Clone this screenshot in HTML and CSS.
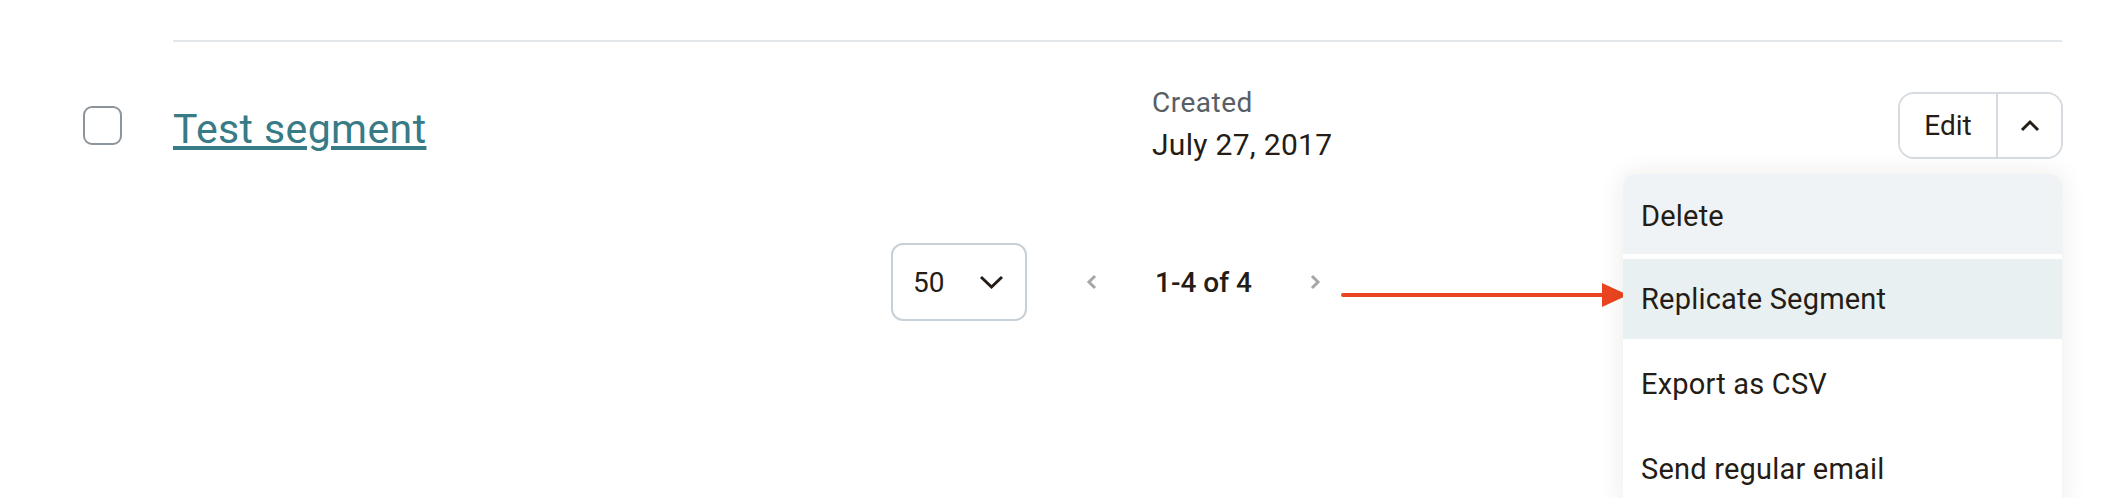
FILE: index.html
```html
<!DOCTYPE html>
<html lang="en">
<head>
<meta charset="utf-8">
<title>Segments</title>
<link rel="stylesheet" href="styles.css">
</head>
<body>
<div class="page">
  <div class="top-space"></div>
  <div class="divider"></div>

  <div class="row">
    <div class="check-cell"><span class="checkbox"></span></div>
    <div class="name-cell"><a class="segment-link" href="#">Test segment</a></div>
    <div class="created-cell">
      <div class="created-label">Created</div>
      <div class="created-date">July 27, 2017</div>
    </div>
    <div class="actions">
      <div class="split">
        <button class="split-main">Edit</button>
        <button class="split-toggle" aria-label="Toggle menu">
          <svg width="20" height="13" viewBox="0 0 20 13"><polyline points="2,11 10,3 18,11" fill="none" stroke="#241c15" stroke-width="3"/></svg>
        </button>
      </div>
      <ul class="menu">
        <li class="menu-item menu-item--first">Delete</li>
        <li class="menu-item menu-item--active">Replicate Segment</li>
        <li class="menu-item">Export as CSV</li>
        <li class="menu-item">Send regular email</li>
      </ul>
    </div>
  </div>

  <div class="pager">
    <div class="per-page">
      <span class="per-page-value">50</span>
      <svg class="per-page-chev" width="25" height="15" viewBox="0 0 25 15"><polyline points="2,2 12.5,12 23,2" fill="none" stroke="#241c15" stroke-width="3"/></svg>
    </div>
    <svg class="pager-prev" width="13" height="16" viewBox="0 0 13 16"><polyline points="10,2 4,8 10,14" fill="none" stroke="#a5a8aa" stroke-width="3"/></svg>
    <span class="pager-count">1-4 of 4</span>
    <svg class="pager-next" width="13" height="16" viewBox="0 0 13 16"><polyline points="3,2 9,8 3,14" fill="none" stroke="#a5a8aa" stroke-width="3"/></svg>
    <svg class="annot-arrow" width="290" height="26" viewBox="0 0 290 26"><line x1="3" y1="13" x2="264" y2="13" stroke="#ea4520" stroke-width="4" stroke-linecap="round"/><polygon points="262,1 288,13 262,25" fill="#ea4520"/></svg>
  </div>
</div>
</body>
</html>
```

FILE: styles.css
```css
html, body {
  margin: 0;
  padding: 0;
  background: #ffffff;
}

body {
  width: 2124px;
  height: 498px;
  overflow: hidden;
  font-family: Roboto, "Liberation Sans", Arial, sans-serif;
  color: #241c15;
}

.page {
  position: relative;
}

.top-space {
  height: 40px;
}

.divider {
  height: 2px;
  background: #e3e7ea;
  margin: 0 62px 0 173px;
}

.row {
  display: grid;
  grid-template-columns: 39px 1030px 1fr auto;
  align-items: center;
  height: 167px;
  padding: 0 61px 0 83px;
}

.checkbox {
  display: block;
  width: 39px;
  height: 39px;
  box-sizing: border-box;
  border: 2px solid #8d959c;
  border-radius: 9px;
}

.name-cell {
  padding-left: 51px;
  padding-top: 6px;
}

.segment-link {
  font-size: 41px;
  letter-spacing: 0.4px;
  color: #367b85;
  text-decoration: underline;
  text-decoration-thickness: 4px;
  text-underline-offset: 3px;
  text-decoration-skip-ink: auto;
}

.created-label {
  font-size: 28px;
  letter-spacing: 0.5px;
  line-height: 36px;
  color: #575e65;
}

.created-date {
  font-size: 30px;
  letter-spacing: 0.3px;
  line-height: 44px;
  padding-top: 2px;
  color: #241c15;
}

.actions {
  position: relative;
}

.split {
  display: flex;
  height: 67px;
  box-sizing: border-box;
  border: 2px solid #d5dbe0;
  border-radius: 16px;
  overflow: hidden;
}

.split button {
  border: 0;
  margin: 0;
  padding: 0;
  background: #ffffff;
  font-family: inherit;
  color: #241c15;
  display: flex;
  align-items: center;
  justify-content: center;
}

.split-main {
  width: 98px;
  font-size: 28px;
  border-right: 2px solid #d5dbe0 !important;
}

.split-toggle {
  width: 63px;
}

.menu {
  position: absolute;
  top: 82px;
  right: 1px;
  width: 439px;
  margin: 0;
  padding: 0;
  list-style: none;
  background: #ffffff;
  border-radius: 12px 12px 0 0;
  box-shadow: 0 0 26px rgba(36, 28, 21, 0.09);
  display: flex;
  flex-direction: column;
  gap: 5px;
  z-index: 2;
}

.menu-item {
  height: 80px;
  line-height: 80px;
  padding-left: 18px;
  font-size: 29px;
  letter-spacing: 0.2px;
  color: #241c15;
  white-space: nowrap;
}

.menu-item--first {
  background: #eff3f6;
  border-radius: 12px 12px 0 0;
  line-height: 84px;
}

.menu-item--active {
  background: #e8f0f2;
}

.pager {
  display: flex;
  align-items: center;
  margin-top: 34px;
  padding-left: 891px;
}

.per-page {
  display: flex;
  align-items: center;
  width: 136px;
  height: 78px;
  box-sizing: border-box;
  border: 2px solid #c7d0d7;
  border-radius: 12px;
  padding: 0 21px 0 20px;
}

.per-page-value {
  font-size: 28px;
}

.per-page-chev {
  margin-left: auto;
}

.pager-prev {
  margin-left: 58px;
}

.pager-count {
  margin-left: 57px;
  font-size: 28px;
  font-weight: 500;
}

.pager-next {
  margin-left: 57px;
}

.annot-arrow {
  margin-left: 18px;
  margin-top: 26px;
}
```
